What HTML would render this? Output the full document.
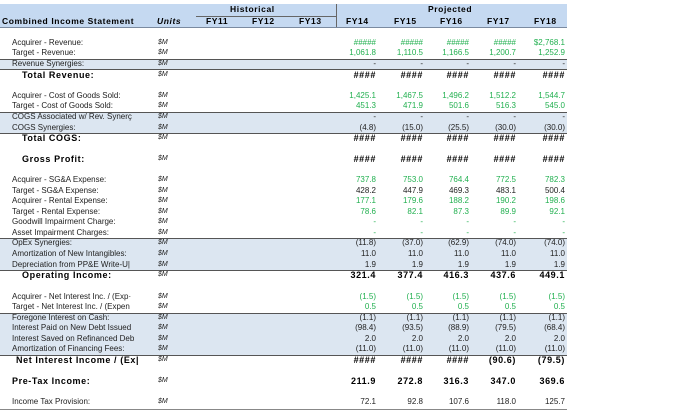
<!DOCTYPE html>
<html><head><meta charset="utf-8"><style>
body{margin:0;width:680px;height:411px;background:#fff;position:relative;overflow:hidden;font-family:"Liberation Sans",Arial,sans-serif;font-size:8px;color:#222}
.a{position:absolute}
.band{position:absolute;left:0;width:567px;background:#dce6f1}
.ln{position:absolute;left:0;width:567px;height:1px;background:#555}
.r{position:absolute;left:0;width:567px;height:10px;line-height:10px}
.r span{position:absolute;white-space:nowrap}
.l{left:12px}.lb{left:22px;font-weight:bold;font-size:9px;letter-spacing:.6px;color:#000}
.u{left:158px;font-style:italic;font-size:7px}
.v{text-align:right;width:44px}
.c1{left:332px}.c2{left:379px}.c3{left:425px}.c4{left:472px}.c5{left:521px}
.g{color:#22b050}
.b{font-weight:bold;font-size:9px;color:#000;letter-spacing:.6px}
.h{font-weight:bold;font-size:8.5px;color:#000;letter-spacing:.6px}
</style></head><body>
<div class="band" style="top:4px;height:23px;background:#c5d9f1"></div>
<div class="a" style="left:0;top:27px;width:567px;height:1px;background:#7a8aa0"></div>
<div class="a" style="left:196px;top:16px;width:140px;height:1px;background:#666"></div>
<div class="a" style="left:336px;top:4px;width:1px;height:23px;background:#666"></div>
<div class="a h" style="left:230px;top:4px;">Historical</div>
<div class="a h" style="left:428px;top:4px;">Projected</div>
<div class="r" style="top:16px"><span class="h" style="left:2px">Combined Income Statement</span><span class="u h" style="left:157px;font-style:italic">Units</span><span class="h" style="left:206px">FY11</span><span class="h" style="left:252px">FY12</span><span class="h" style="left:299px">FY13</span><span class="h" style="left:346px">FY14</span><span class="h" style="left:394px">FY15</span><span class="h" style="left:440px">FY16</span><span class="h" style="left:487px">FY17</span><span class="h" style="left:534px">FY18</span></div>

<div class="band" style="top:59px;height:10px"></div><div class="ln" style="top:59px"></div><div class="ln" style="top:69px"></div>
<div class="band" style="top:112px;height:21px"></div><div class="ln" style="top:112px"></div><div class="ln" style="top:133px"></div>
<div class="band" style="top:238px;height:32px"></div><div class="ln" style="top:238px"></div><div class="ln" style="top:270px"></div>
<div class="band" style="top:313px;height:42px"></div><div class="ln" style="top:313px"></div><div class="ln" style="top:355px"></div>
<div class="a" style="left:0;top:409px;width:567px;height:1px;background:#888"></div>

<div class="r" style="top:38px"><span class="l">Acquirer - Revenue:</span><span class="u">$M</span><span class="v c1 g">#####</span><span class="v c2 g">#####</span><span class="v c3 g">#####</span><span class="v c4 g">#####</span><span class="v c5 g">$2,768.1</span></div>
<div class="r" style="top:48px"><span class="l">Target - Revenue:</span><span class="u">$M</span><span class="v c1 g">1,061.8</span><span class="v c2 g">1,110.5</span><span class="v c3 g">1,166.5</span><span class="v c4 g">1,200.7</span><span class="v c5 g">1,252.9</span></div>
<div class="r" style="top:59px"><span class="l">Revenue Synergies:</span><span class="u">$M</span><span class="v c1">-</span><span class="v c2">-</span><span class="v c3">-</span><span class="v c4">-</span><span class="v c5">-</span></div>
<div class="r" style="top:70px"><span class="lb">Total Revenue:</span><span class="u">$M</span><span class="v c1 b">####</span><span class="v c2 b">####</span><span class="v c3 b">####</span><span class="v c4 b">####</span><span class="v c5 b">####</span></div>

<div class="r" style="top:91px"><span class="l">Acquirer - Cost of Goods Sold:</span><span class="u">$M</span><span class="v c1 g">1,425.1</span><span class="v c2 g">1,467.5</span><span class="v c3 g">1,496.2</span><span class="v c4 g">1,512.2</span><span class="v c5 g">1,544.7</span></div>
<div class="r" style="top:101px"><span class="l">Target - Cost of Goods Sold:</span><span class="u">$M</span><span class="v c1 g">451.3</span><span class="v c2 g">471.9</span><span class="v c3 g">501.6</span><span class="v c4 g">516.3</span><span class="v c5 g">545.0</span></div>
<div class="r" style="top:112px"><span class="l">COGS Associated w/ Rev. Synerç</span><span class="u">$M</span><span class="v c1">-</span><span class="v c2">-</span><span class="v c3">-</span><span class="v c4">-</span><span class="v c5">-</span></div>
<div class="r" style="top:123px"><span class="l">COGS Synergies:</span><span class="u">$M</span><span class="v c1">(4.8)</span><span class="v c2">(15.0)</span><span class="v c3">(25.5)</span><span class="v c4">(30.0)</span><span class="v c5">(30.0)</span></div>
<div class="r" style="top:133px"><span class="lb">Total COGS:</span><span class="u">$M</span><span class="v c1 b">####</span><span class="v c2 b">####</span><span class="v c3 b">####</span><span class="v c4 b">####</span><span class="v c5 b">####</span></div>

<div class="r" style="top:154px"><span class="lb">Gross Profit:</span><span class="u">$M</span><span class="v c1 b">####</span><span class="v c2 b">####</span><span class="v c3 b">####</span><span class="v c4 b">####</span><span class="v c5 b">####</span></div>

<div class="r" style="top:175px"><span class="l">Acquirer - SG&amp;A Expense:</span><span class="u">$M</span><span class="v c1 g">737.8</span><span class="v c2 g">753.0</span><span class="v c3 g">764.4</span><span class="v c4 g">772.5</span><span class="v c5 g">782.3</span></div>
<div class="r" style="top:186px"><span class="l">Target - SG&amp;A Expense:</span><span class="u">$M</span><span class="v c1">428.2</span><span class="v c2">447.9</span><span class="v c3">469.3</span><span class="v c4">483.1</span><span class="v c5">500.4</span></div>
<div class="r" style="top:196px"><span class="l">Acquirer - Rental Expense:</span><span class="u">$M</span><span class="v c1 g">177.1</span><span class="v c2 g">179.6</span><span class="v c3 g">188.2</span><span class="v c4 g">190.2</span><span class="v c5 g">198.6</span></div>
<div class="r" style="top:207px"><span class="l">Target - Rental Expense:</span><span class="u">$M</span><span class="v c1 g">78.6</span><span class="v c2 g">82.1</span><span class="v c3 g">87.3</span><span class="v c4 g">89.9</span><span class="v c5 g">92.1</span></div>
<div class="r" style="top:217px"><span class="l">Goodwill Impairment Charge:</span><span class="u">$M</span><span class="v c1 g">-</span><span class="v c2 g">-</span><span class="v c3 g">-</span><span class="v c4 g">-</span><span class="v c5 g">-</span></div>
<div class="r" style="top:228px"><span class="l">Asset Impairment Charges:</span><span class="u">$M</span><span class="v c1 g">-</span><span class="v c2 g">-</span><span class="v c3 g">-</span><span class="v c4 g">-</span><span class="v c5 g">-</span></div>
<div class="r" style="top:238px"><span class="l">OpEx Synergies:</span><span class="u">$M</span><span class="v c1">(11.8)</span><span class="v c2">(37.0)</span><span class="v c3">(62.9)</span><span class="v c4">(74.0)</span><span class="v c5">(74.0)</span></div>
<div class="r" style="top:249px"><span class="l">Amortization of New Intangibles:</span><span class="u">$M</span><span class="v c1">11.0</span><span class="v c2">11.0</span><span class="v c3">11.0</span><span class="v c4">11.0</span><span class="v c5">11.0</span></div>
<div class="r" style="top:260px"><span class="l">Depreciation from PP&amp;E Write-U|</span><span class="u">$M</span><span class="v c1">1.9</span><span class="v c2">1.9</span><span class="v c3">1.9</span><span class="v c4">1.9</span><span class="v c5">1.9</span></div>
<div class="r" style="top:270px"><span class="lb">Operating Income:</span><span class="u">$M</span><span class="v c1 b">321.4</span><span class="v c2 b">377.4</span><span class="v c3 b">416.3</span><span class="v c4 b">437.6</span><span class="v c5 b">449.1</span></div>

<div class="r" style="top:292px"><span class="l">Acquirer - Net Interest Inc. / (Exp·</span><span class="u">$M</span><span class="v c1 g">(1.5)</span><span class="v c2 g">(1.5)</span><span class="v c3 g">(1.5)</span><span class="v c4 g">(1.5)</span><span class="v c5 g">(1.5)</span></div>
<div class="r" style="top:302px"><span class="l">Target - Net Interest Inc. / (Expen</span><span class="u">$M</span><span class="v c1 g">0.5</span><span class="v c2 g">0.5</span><span class="v c3 g">0.5</span><span class="v c4 g">0.5</span><span class="v c5 g">0.5</span></div>
<div class="r" style="top:313px"><span class="l">Foregone Interest on Cash:</span><span class="u">$M</span><span class="v c1">(1.1)</span><span class="v c2">(1.1)</span><span class="v c3">(1.1)</span><span class="v c4">(1.1)</span><span class="v c5">(1.1)</span></div>
<div class="r" style="top:323px"><span class="l">Interest Paid on New Debt Issued</span><span class="u">$M</span><span class="v c1">(98.4)</span><span class="v c2">(93.5)</span><span class="v c3">(88.9)</span><span class="v c4">(79.5)</span><span class="v c5">(68.4)</span></div>
<div class="r" style="top:334px"><span class="l">Interest Saved on Refinanced Deb</span><span class="u">$M</span><span class="v c1">2.0</span><span class="v c2">2.0</span><span class="v c3">2.0</span><span class="v c4">2.0</span><span class="v c5">2.0</span></div>
<div class="r" style="top:344px"><span class="l">Amortization of Financing Fees:</span><span class="u">$M</span><span class="v c1">(11.0)</span><span class="v c2">(11.0)</span><span class="v c3">(11.0)</span><span class="v c4">(11.0)</span><span class="v c5">(11.0)</span></div>
<div class="r" style="top:355px"><span class="lb" style="left:16px">Net Interest Income / (Ex|</span><span class="u">$M</span><span class="v c1 b">####</span><span class="v c2 b">####</span><span class="v c3 b">####</span><span class="v c4 b">(90.6)</span><span class="v c5 b">(79.5)</span></div>

<div class="r" style="top:376px"><span class="lb" style="left:12px">Pre-Tax Income:</span><span class="u">$M</span><span class="v c1 b">211.9</span><span class="v c2 b">272.8</span><span class="v c3 b">316.3</span><span class="v c4 b">347.0</span><span class="v c5 b">369.6</span></div>

<div class="r" style="top:397px"><span class="l">Income Tax Provision:</span><span class="u">$M</span><span class="v c1">72.1</span><span class="v c2">92.8</span><span class="v c3">107.6</span><span class="v c4">118.0</span><span class="v c5">125.7</span></div>
</body></html>
